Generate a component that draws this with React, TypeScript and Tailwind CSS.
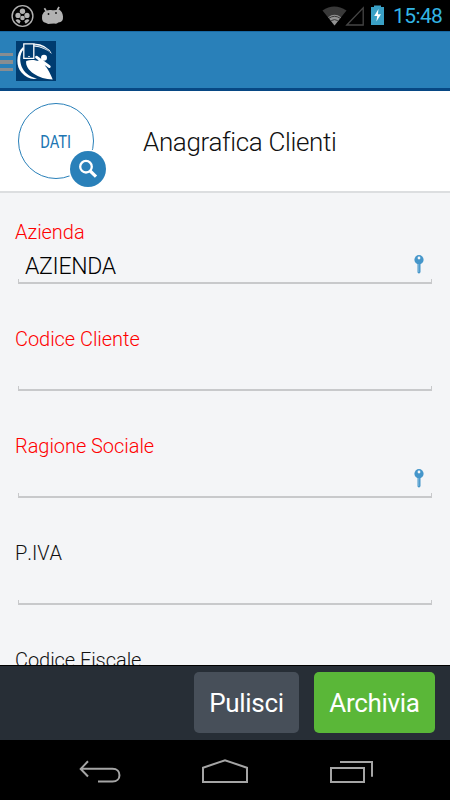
import React from "react";

type FieldProps = { label: string; value?: string; required?: boolean; lookup?: boolean };

function KeyIcon() {
  return (
    <svg className="mt-[11px] mr-[8px] h-[19px] w-[10px]" viewBox="0 0 10 19">
      <path d="M3.5 8h3v9.2L5 18.7l-1.5-1.3z" fill="#4596ca" />
      <circle cx="5" cy="4.7" r="4.6" fill="#4596ca" />
      <circle cx="5" cy="3" r="1.4" fill="#f4f5f7" />
      <path d="M4.7 9v8" stroke="#9bc8e4" strokeWidth=".6" />
    </svg>
  );
}

function Field({ label, value = "", required = false, lookup = false }: FieldProps) {
  return (
    <div className="h-[107px] shrink-0 pl-[15px]">
      <div className={`h-6 text-[20px] leading-6 font-light tracking-[-0.05px] whitespace-nowrap [font-kerning:none] ${required ? "text-[#ff0000]" : "text-[#111111]"}`}>
        {label}
      </div>
      <div className="ml-[3px] flex h-[35px] w-[414px] justify-between">
        <span className="pt-[9px] pl-[7px] text-[23px] leading-[27px] font-light tracking-[-0.3px] text-black">{value}</span>
        {lookup && <KeyIcon />}
      </div>
      <div className="ml-[3px] h-[5px] w-[414px] border-x border-b-2 border-[#c8c9cb]" />
    </div>
  );
}

function StatusBar() {
  return (
    <div className="flex h-[31px] shrink-0 items-center bg-black">
      <svg className="ml-[11px] h-[24px] w-[24px]" viewBox="0 0 24 24">
        <circle cx="11.5" cy="12" r="10.4" fill="none" stroke="#b2b2b2" strokeWidth="1.4" />
        <g fill="#b2b2b2">
          <circle cx="11.5" cy="7.2" r="2.7" />
          <circle cx="7" cy="11.4" r="2.6" />
          <circle cx="16" cy="11.4" r="2.6" />
          <circle cx="11.5" cy="14" r="2.3" />
          <path d="M4.5 16q3-2 5.2 1.2l-1.4 2.5Q6 19 4.5 16M18.5 16q-3-2-5.2 1.2l1.4 2.5q2.3-.7 3.8-3.7" />
        </g>
      </svg>
      <svg className="ml-[6px] h-[20px] w-[24px]" viewBox="0 0 24 20">
        <path d="M5.2 5 3.4 2.3M16.3 4l1.8-3" stroke="#b2b2b2" strokeWidth="1.7" />
        <path d="M3 6Q6 3.5 10 4t8-.4q3.6 2 4 7 .2 5-2.5 5.3l-2.2.5q-1.5 1.5-4 1.2-2.5 0-3.8.2l-2.3.2-2.7-1.2Q1 16 1 12q0-4 2-6" fill="#b2b2b2" />
        <circle cx="7.5" cy="8" r=".9" fill="#111" />
        <circle cx="15" cy="7" r=".9" fill="#111" />
      </svg>
      <div className="ml-auto flex items-center">
        <svg className="h-[31px] w-[64px]" viewBox="0 0 64 31">
          <path d="M1.5 10.5Q13 2.5 25.5 10.5L13.5 25.5z" fill="#393939" />
          <path d="M7.2 17.2q6.3-4.8 12.8 0l-6.5 8.3z" fill="#929292" />
          <path d="M8 18.2q5.5-3.8 11 0M10.2 20.6q3.3-2 6.6 0" fill="none" stroke="#393939" strokeWidth="1" />
          <path d="M25.8 25 42.2 7.8V25z" fill="none" stroke="#454545" strokeWidth="1.3" />
          <path d="M50 7h3V5.5h7V7h3v18H50z" fill="#3aa0c5" />
          <path d="m57.5 9-4.3 7h3l-.8 5.4 4.6-7.1h-3.1z" fill="#fff" />
        </svg>
        <span className="mt-px mr-[7px] ml-[8px] w-[50px] text-[21px] leading-6 tracking-[-0.6px] whitespace-nowrap text-[#33b5e5]">15:48</span>
      </div>
    </div>
  );
}

function Header() {
  return (
    <header className="flex h-[60px] shrink-0 items-center border-b-[3px] border-[#074884] bg-[#2980b9] shadow-[inset_0_1px_0_#196aa4]">
      <div className="mt-[4px] flex w-[13px] flex-col gap-1">
        <i className="h-[3px] bg-[#888d91]" />
        <i className="h-[4px] bg-[#888d91]" />
        <i className="h-[3px] bg-[#888d91]" />
      </div>
      <svg className="mt-[3px] ml-[3px] h-[40px] w-[40px]" viewBox="0 0 40 40">
        <path d="M0 0h40v40H0z" fill="#003c70" />
        <path d="M7 6C0 12-.5 25 5.5 31.5 10 37 16 38.8 21 37.5 13 36 8 31 5.8 26 3 19 4 12 8 8z" fill="#fff" />
        <path d="M18 2.5q13 .5 18 10.5-7-6.5-18-7.5z" fill="#fff" />
        <path d="M18 4q10 1.2 16 7" fill="none" stroke="#003c70" strokeWidth=".6" />
        <path d="M10.2 20c7-2.5 15-.2 20 6q3 4 6.5 12.5-11-.3-18.5-5.5C12 29 9.5 24 10.2 20z" fill="#fff" />
        <path d="m20.5 16.2 12.8 9.4" stroke="#fff" strokeWidth="2.8" strokeLinecap="round" />
        <path d="m20 20.5 6-2.5 4 6-3 2z" fill="#fff" />
        <circle cx="28" cy="16.8" r="3" fill="#fff" />
        <path d="M7.8 2.8h10v14.5h-10z" fill="#003c70" stroke="#fff" strokeWidth="1.3" />
        <path d="M12 15.5h2" stroke="#fff" strokeWidth=".7" />
      </svg>
    </header>
  );
}

function TitlePanel() {
  return (
    <section className="flex h-[102px] shrink-0 items-center border-b-2 border-[#dcdee0] bg-white">
      <div className="relative ml-[18px] flex h-[76px] w-[76px] items-center justify-center rounded-full border border-[#2980b9]">
        <span className="mt-[1px] scale-x-[0.82] text-[18px] leading-5 tracking-[-0.2px] text-[#2075b2]">DATI</span>
        <svg className="absolute top-[45px] left-[49px] h-[40px] w-[40px]" viewBox="0 0 40 40">
          <circle cx="20" cy="20" r="19.8" fill="#fff" />
          <circle cx="20" cy="20" r="18" fill="#2980b9" />
          <circle cx="18" cy="17.7" r="5.8" fill="none" stroke="#fff" strokeWidth="2.3" />
          <path d="m22.2 22 5.8 5.6" stroke="#fff" strokeWidth="3.2" />
        </svg>
      </div>
      <h1 className="ml-[49px] pt-px text-[26px] leading-8 font-light tracking-[-0.35px] whitespace-nowrap text-[#111]">Anagrafica Clienti</h1>
    </section>
  );
}

function NavBar() {
  return (
    <nav className="h-[60px] shrink-0 bg-black">
      <svg className="h-[60px] w-[450px]" viewBox="0 0 450 60" fill="none" stroke="#a5a5a5" strokeWidth="2">
        <path d="M88 21.3l-7.3 7.6 7.3 7.6M81 28.8h31.5c9.3 0 9.3 12.8 0 12.8H98" />
        <path d="M203 42V27.8l22-7.6 22 7.6V42z" />
        <path d="M331 28h33v14h-33zM340 22h32v14.7" />
      </svg>
    </nav>
  );
}

export default function App() {
  return (
    <div className="flex h-[800px] w-[450px] flex-col overflow-hidden bg-[#f4f5f7] font-['Roboto',sans-serif]">
      <StatusBar />
      <Header />
      <TitlePanel />
      <main className="flex h-[472px] shrink-0 flex-col overflow-hidden pt-[27px]">
        <Field label="Azienda" value="AZIENDA" required lookup />
        <Field label="Codice Cliente" required />
        <Field label="Ragione Sociale" required lookup />
        <Field label="P.IVA" />
        <Field label="Codice Fiscale" />
      </main>
      <footer className="flex h-[75px] shrink-0 items-start justify-end gap-[15px] border-t border-black bg-[#272e36] pt-[6px] pr-[15px] text-[26px] tracking-[-0.3px] text-white">
        <button className="h-[61px] w-[105px] rounded-[5px] bg-[#474f59] pt-px">Pulisci</button>
        <button className="h-[61px] w-[121px] rounded-[5px] bg-[#5ab738] pt-px">Archivia</button>
      </footer>
      <NavBar />
    </div>
  );
}
